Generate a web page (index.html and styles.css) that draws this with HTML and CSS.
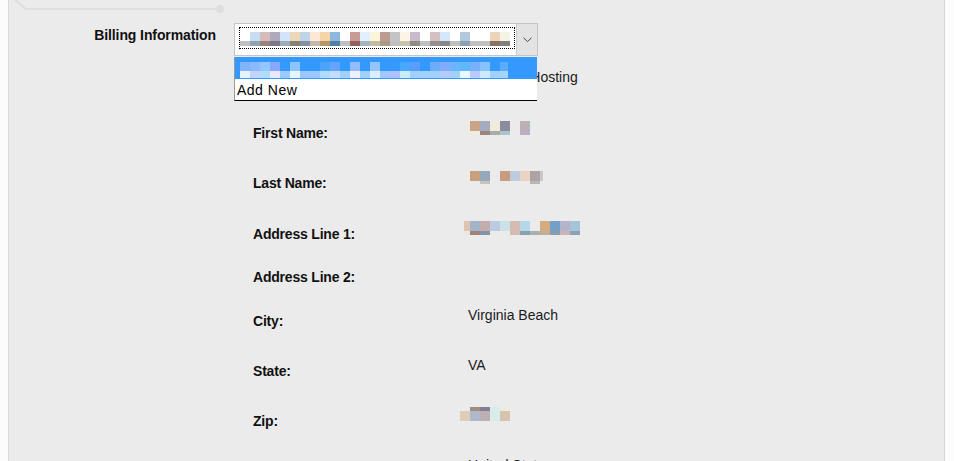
FILE: index.html
```html
<!DOCTYPE html>
<html lang="en">
<head>
<meta charset="utf-8">
<title>Billing Information</title>
<link rel="stylesheet" href="styles.css">
</head>
<body>
<div class="page">
  <div class="panel">
    <svg class="stepper" width="230" height="14" viewBox="0 0 230 14">
      <polyline points="5,-1 17,9 211,9" fill="none" stroke="#dedede" stroke-width="2"/>
      <circle cx="211" cy="9" r="4" fill="#dedede"/>
    </svg>

    <div class="billing">
      <div class="billing-label">Billing Information</div>
      <div class="select-wrap">
        <div class="select">
          <div class="select-value"><div class="mosaic m-select"></div></div>
          <div class="select-btn">
            <svg width="9" height="6" viewBox="0 0 9 6"><polyline points="0.5,0.8 4.5,4.6 8.5,0.8" fill="none" stroke="#444" stroke-width="1"/></svg>
          </div>
        </div>
        <div class="dropdown">
          <div class="opt opt-active"><div class="mosaic m-blue"></div></div>
          <div class="opt">Add New</div>
        </div>
      </div>
    </div>

    <div class="fields">
      <div class="row"><div class="label"></div><div class="value">Managed Hosting</div></div>
      <div class="row"><div class="label">First Name:</div><div class="value"><div class="mosaic m-first"></div></div></div>
      <div class="row row-51"><div class="label">Last Name:</div><div class="value"><div class="mosaic m-last"></div></div></div>
      <div class="row row-43"><div class="label">Address Line 1:</div><div class="value"><div class="mosaic m-addr"></div></div></div>
      <div class="row row-44"><div class="label">Address Line 2:</div><div class="value"></div></div>
      <div class="row"><div class="label">City:</div><div class="value">Virginia Beach</div></div>
      <div class="row"><div class="label">State:</div><div class="value">VA</div></div>
      <div class="row"><div class="label">Zip:</div><div class="value"><div class="mosaic m-zip"></div></div></div>
      <div class="row"><div class="label">Country:</div><div class="value">United States</div></div>
    </div>
  </div>
</div>
</body>
</html>
```

FILE: styles.css
```css
html, body {
  margin: 0;
  padding: 0;
  background: #fcfcfc;
  overflow: hidden;
}

body {
  font-family: "Liberation Sans", Arial, sans-serif;
  font-size: 14px;
  line-height: 16px;
  color: #111;
}

.page {
  padding-left: 8px;
}

.panel {
  width: 935px;
  min-height: 520px;
  background: #ebebeb;
  border-left: 1px solid #dadada;
  border-right: 1px solid #d6d6d6;
}

.stepper {
  display: block;
  overflow: visible;
}

.billing {
  display: flex;
  align-items: flex-start;
  gap: 18px;
  margin-top: 9px;
}

.billing-label {
  width: 207px;
  text-align: right;
  font-weight: bold;
  padding-top: 4px;
  letter-spacing: -0.1px;
}

.select-wrap {
  position: relative;
  width: 304px;
}

.select {
  display: flex;
  height: 31px;
  background: #fff;
  border: 1px solid #c4c4c4;
}

.select-value {
  flex: 1;
  margin: 3px 0 3px 4px;
  height: 22px;
  border: 1px dotted #000;
  padding: 4px 0 0 0;
  box-sizing: border-box;
}

.select-btn {
  width: 20px;
  margin-left: 1px;
  background: #e3e3e3;
  border-left: 1px solid #cdcdcd;
  display: flex;
  align-items: center;
  justify-content: center;
}

.dropdown {
  position: absolute;
  top: 34px;
  left: 0;
  width: 302px;
  background: #fff;
  border-left: 1px solid #9a9a9a;
  border-bottom: 1px solid #000;
  z-index: 2;
}

.opt {
  height: 21px;
  padding-left: 2px;
  font-size: 14px;
  line-height: 22px;
  letter-spacing: 0.5px;
  color: #000;
}

.opt-active {
  height: 22px;
  background: #3399ff;
  padding: 5px 0 0 5px;
  box-sizing: border-box;
}

.fields {
  margin-top: 13px;
  padding-left: 244px;
}

.row {
  display: flex;
  align-items: flex-start;
  height: 50px;
}

.row-51 { height: 51px; }
.row-43 { height: 43px; }
.row-44 { height: 44px; }

.label {
  width: 215px;
  flex: none;
  padding-top: 6px;
  font-weight: bold;
  letter-spacing: -0.2px;
  color: #111;
}

.value {
  color: #1a1a1a;
}

.mosaic {
  background-repeat: no-repeat;
}

.m-select {
  width: 270px;
  height: 14px;
  background-image:
    linear-gradient(to right, #fff 0 10px, #c8dcf0 10px 20px, #d4bcbc 20px 30px, #b0a8bc 30px 40px, #d4e4f8 40px 50px, #ecd8b8 50px 60px, #c0d4e8 60px 70px, #fce8d4 70px 80px, #f4d4a8 80px 90px, #8cb8e0 90px 100px, #fff 100px 110px, #c89c94 110px 120px, #e0f0fc 120px 130px, #fcf4d8 130px 140px, #bc9c90 140px 150px, #c4c4c4 150px 160px, #fcf4e4 160px 170px, #c8bccc 170px 180px, #fff 180px 190px, #d4c0c0 190px 200px, #d4e8fc 200px 210px, #fff 210px 220px, #b4c8dc 220px 230px, #fff 230px 250px, #ecd4bc 250px 260px, #f4f4e4 260px 270px),
    linear-gradient(to right, #c0c0c0 0 10px, #90a4b4 10px 20px, #9c8080 20px 30px, #7c7888 30px 40px, #9cacbc 40px 50px, #888070 50px 60px, #8490a4 60px 70px, #c4b8a8 70px 80px, #b89468 80px 90px, #5080a8 90px 100px, #c0c0c0 100px 110px, #946058 110px 120px, #a4b4c0 120px 130px, #c4bca0 130px 140px, #a89c88 140px 150px, #c0c0c0 150px 160px, #c4c4b0 160px 170px, #908c80 170px 180px, #c0c0c0 180px 190px, #988c8c 190px 200px, #888888 200px 210px, #c0c0c0 210px 220px, #8ca0b4 220px 230px, #c0c0c0 230px 250px, #8c7060 250px 260px, #808080 260px 270px);
  background-size: 270px 9px, 270px 5px;
  background-position: 0 0, 0 9px;
}

.m-blue {
  width: 268px;
  height: 16px;
  background-image:
    linear-gradient(to right, #7fb4fc 0 10px, #8cb8fc 10px 20px, #90c8fc 20px 30px, #88a8fc 30px 40px, #3399ff 40px 50px, #8cc4fc 50px 60px, #3399ff 60px 80px, #4aa4fc 80px 90px, #64a4fc 90px 100px, #3399ff 100px 110px, #94bcfc 110px 120px, #3399ff 120px 130px, #94c4fc 130px 140px, #3399ff 140px 160px, #48a8fc 160px 170px, #5c9cfc 170px 180px, #3399ff 180px 190px, #6cacfc 190px 200px, #80acfc 200px 210px, #6cb4fc 210px 220px, #60b8fc 220px 230px, #78b0fc 230px 240px, #88c4fc 240px 250px, #3399ff 250px 260px, #5cacfc 260px 268px),
    linear-gradient(to right, #e8f2fc 0 10px, #c0d4fc 10px 20px, #b0dcfc 20px 30px, #ece8fc 30px 40px, #9ccafc 40px 50px, #e8f4fc 50px 60px, #9cc8fc 60px 80px, #b0dcfc 80px 90px, #c4dcfc 90px 100px, #a0d0fc 100px 110px, #f0f0fc 110px 120px, #a0d0fc 120px 130px, #dceefc 130px 140px, #a0c8fc 140px 150px, #b0c0fc 150px 160px, #c8ecfc 160px 170px, #a0d0fc 170px 200px, #b4ccfc 200px 210px, #a0d0fc 210px 220px, #e8f8fc 220px 230px, #b8ccfc 230px 240px, #d0e8fc 240px 250px, #a0d0fc 250px 260px, #a4d4fc 260px 268px);
  background-size: 268px 9px, 268px 7px;
  background-position: 0 0, 0 9px;
}

.m-first {
  width: 65px;
  height: 14px;
  margin-top: 2px;
  background-image:
    linear-gradient(to right, #f0ece0 0 2px, #c8a488 2px 12px, #a4acc0 12px 22px, #f0ecdc 22px 32px, #8c8ca0 32px 42px, transparent 42px 52px, #bcb0b4 52px 62px, #dcf0f0 62px 65px),
    linear-gradient(to right, #f0ece0 0 12px, #9c847c 12px 22px, #a8aca8 22px 32px, #acc4c8 32px 42px, transparent 42px 52px, #bcacc8 52px 62px, #e0f0f0 62px 65px);
  background-size: 65px 10px, 65px 4px;
  background-position: 0 0, 0 10px;
}

.m-last {
  width: 75px;
  height: 13px;
  margin-top: 2px;
  background-image:
    linear-gradient(to right, #f0ece0 0 2px, #c8a080 2px 12px, #98a8bc 12px 22px, transparent 22px 32px, #c89c7c 32px 42px, #bcccdc 42px 52px, #e8d4c0 52px 62px, #aca4a4 62px 72px, #c8c8c8 72px 75px),
    linear-gradient(to right, transparent 0 12px, #c8c4b8 12px 22px, transparent 22px 62px, #b8b8b8 62px 72px, transparent 72px 75px);
  background-size: 75px 10px, 75px 3px;
  background-position: 0 0, 0 10px;
}

.m-addr {
  width: 116px;
  height: 14px;
  margin-top: 1px;
  margin-left: -4px;
  background-image:
    linear-gradient(to right, #dcc4b0 0 6px, #a4b4c8 6px 16px, #c4acac 16px 26px, #bccce0 26px 36px, #cce0e8 36px 46px, #d4bcb4 46px 56px, #b4d8e8 56px 66px, transparent 66px 76px, #d4ac80 76px 86px, #74a0c8 86px 96px, #b4b4cc 96px 106px, #a4c4d8 106px 116px),
    linear-gradient(to right, #ece8e0 0 6px, #9c8478 6px 16px, #8494a8 16px 26px, transparent 26px 46px, #d4bcb4 46px 56px, #8ca0b0 56px 66px, #aab0b0 66px 76px, #c0b094 76px 86px, #8c9cb0 86px 96px, #c8b4b4 96px 106px, #90a0b4 106px 116px);
  background-size: 116px 10px, 116px 4px;
  background-position: 0 0, 0 10px;
}

.m-zip {
  width: 50px;
  height: 14px;
  margin-left: -8px;
  background-image:
    linear-gradient(to right, transparent 0 10px, #a08c7c 10px 20px, #808094 20px 30px, #d8ecec 30px 40px, #ecece0 40px 50px),
    linear-gradient(to right, #e0ccb8 0 10px, #b0b8cc 10px 20px, #bcb0b4 20px 30px, #d8ecec 30px 40px, #d8c4ac 40px 50px);
  background-size: 50px 4px, 50px 10px;
  background-position: 0 0, 0 4px;
}
```
